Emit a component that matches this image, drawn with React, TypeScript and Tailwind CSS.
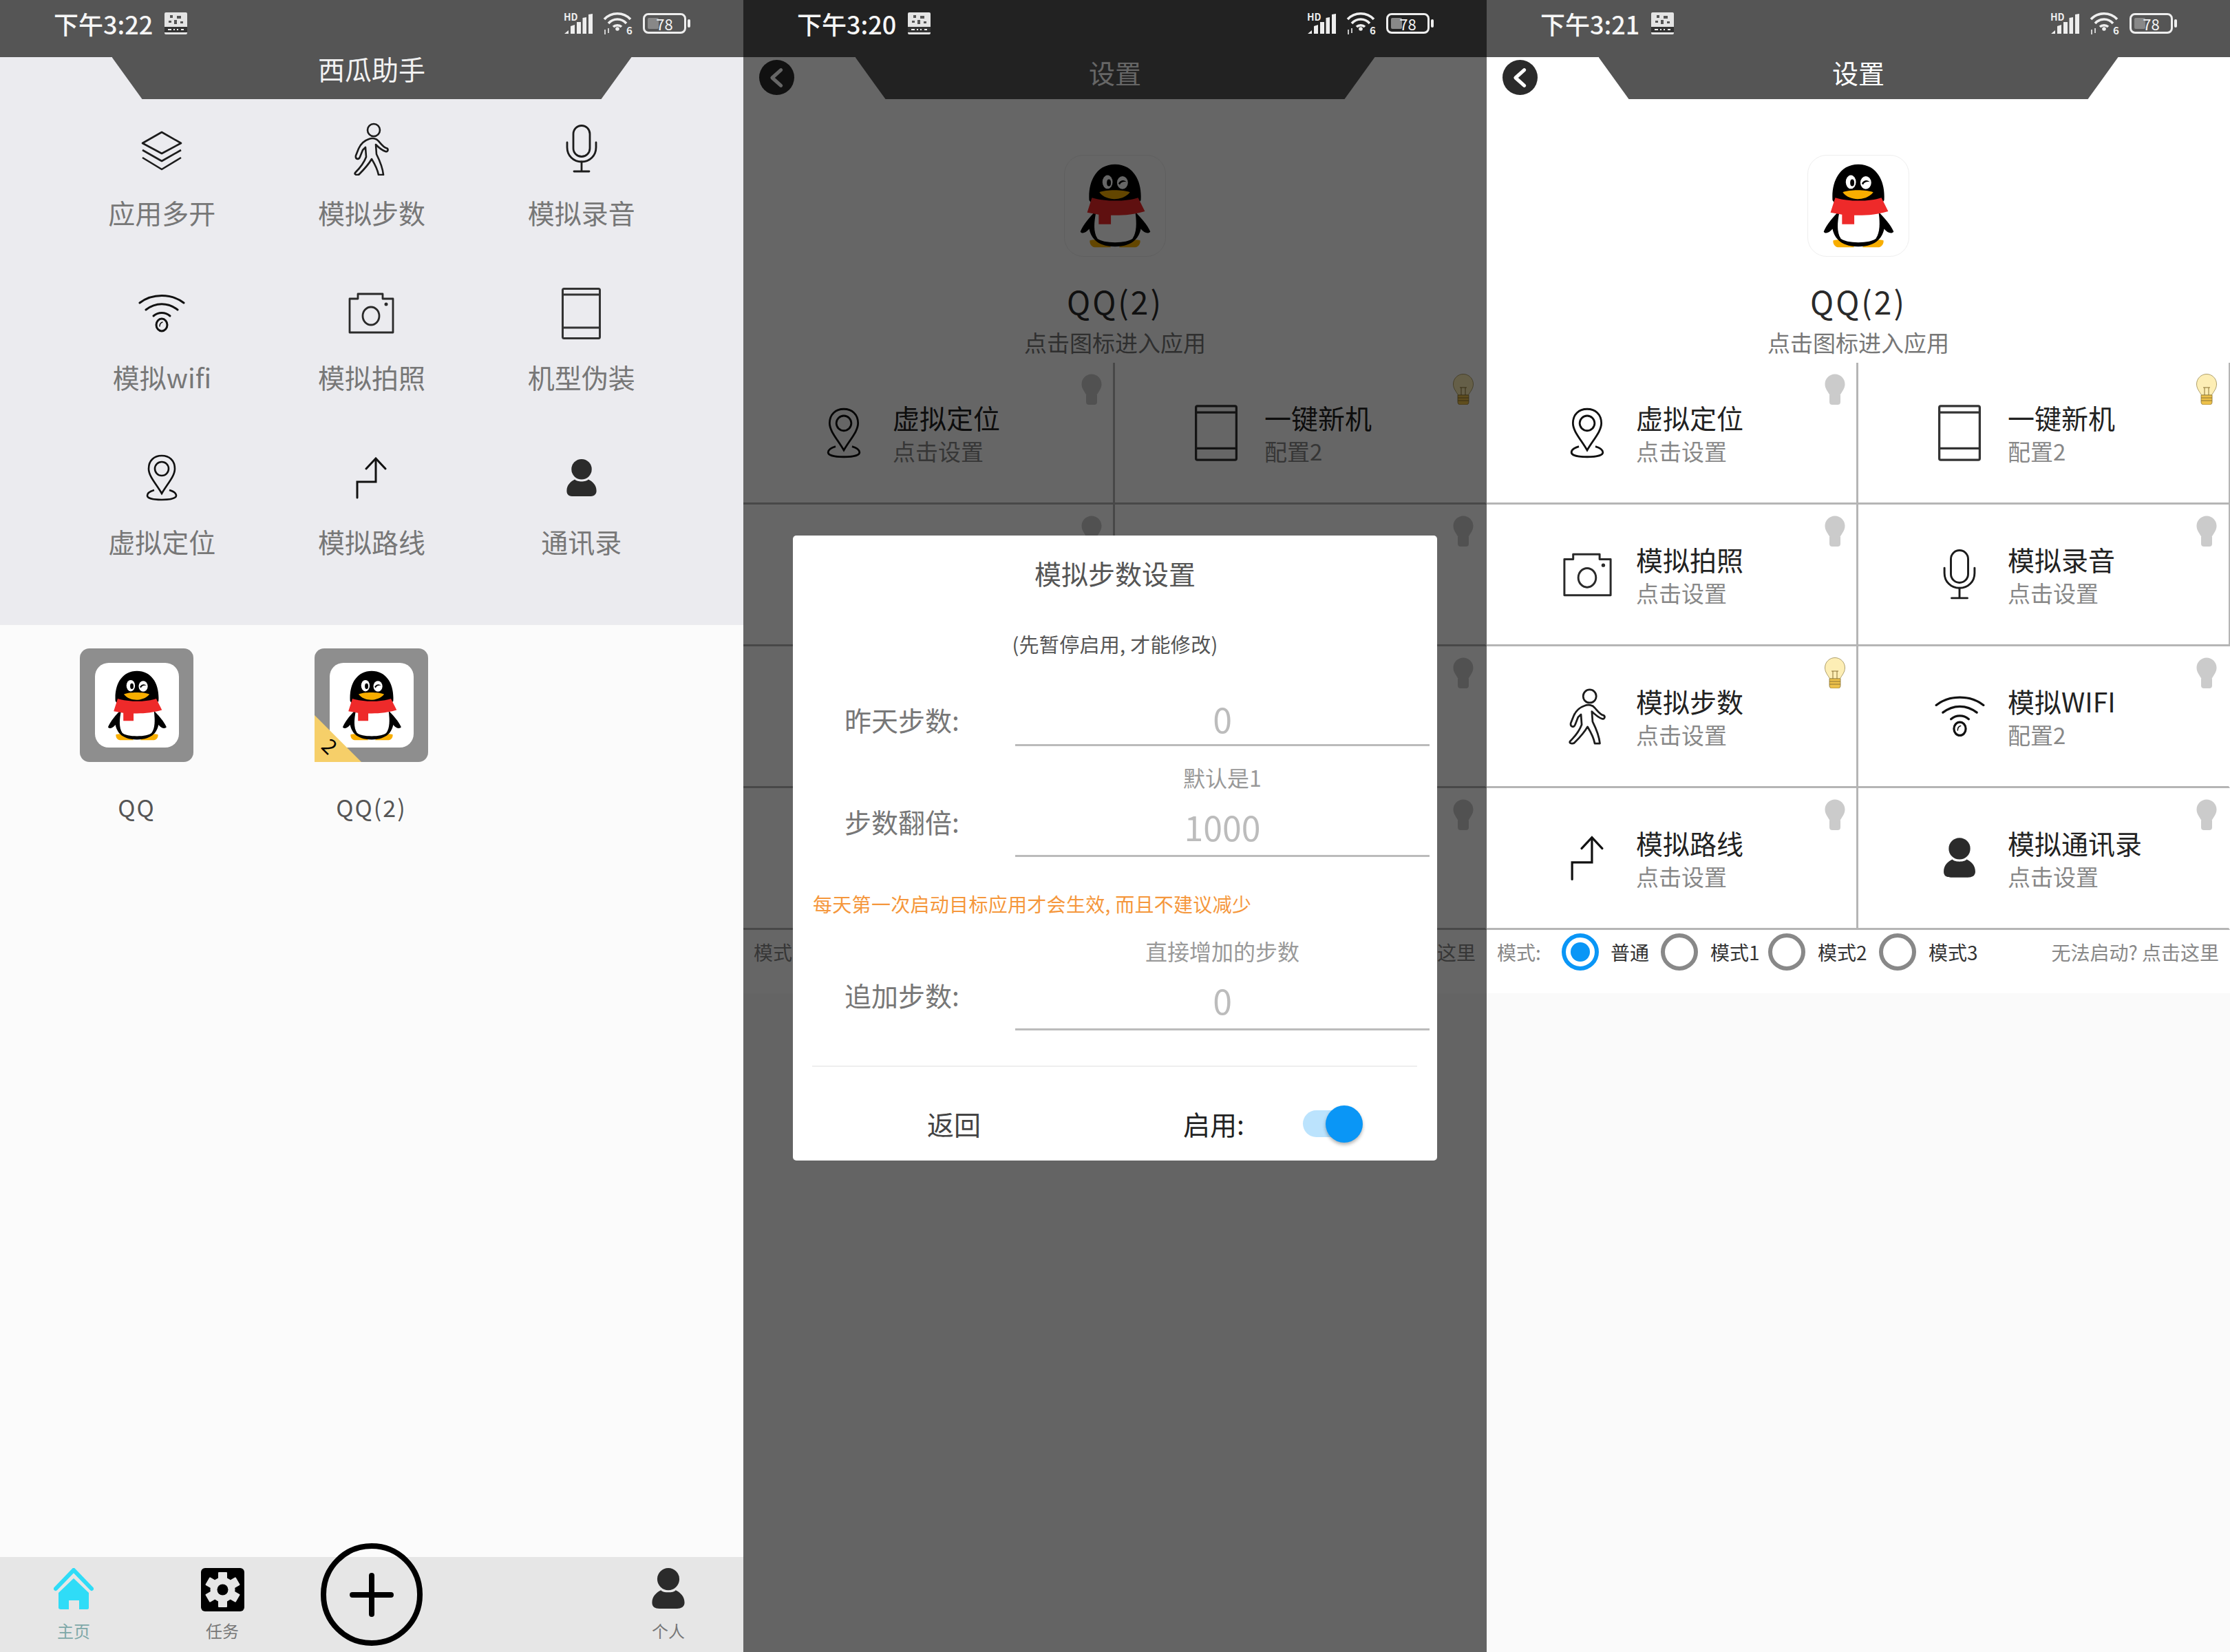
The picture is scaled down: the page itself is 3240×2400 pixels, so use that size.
import React from "react";

type IconProps = { className?: string };

function LayersIcon({ className }: IconProps) {
  return (
    <svg viewBox="0 0 60 58" className={className} fill="none" stroke="#1c1c1c" strokeWidth="2.6" strokeLinejoin="round">
      <path d="M30 2 L58 18 L30 33 L2 18 Z" />
      <path d="M2 28 L30 44 L58 28" />
      <path d="M2 39 L30 56 L58 39" />
    </svg>
  );
}

function WalkerIcon({ className }: IconProps) {
  return (
    <svg viewBox="0 0 53 77" className={className} fill="none" stroke="#1c1c1c" strokeWidth="2.6" strokeLinejoin="round">
      <circle cx="30" cy="11" r="9" />
      <path d="M23 24 C17 26 11 31 8 38 L4 48 C3 53 8 55 10 50 L14 40 L18 36 L19 50 C16 58 10 66 3 73 C1 76 7 77 9 75 C16 68 23 60 27 53 C30 58 35 66 37 76 L44 76 C43 66 38 54 34 46 L33 32 C37 36 41 40 47 42 C51 43 52 38 48 37 C43 35 40 30 37 27 C34 23 28 22 23 24 Z" />
    </svg>
  );
}

function MicIcon({ className }: IconProps) {
  return (
    <svg viewBox="0 0 46 70" className={className} fill="none" stroke="#1c1c1c" strokeWidth="2.8" strokeLinecap="round">
      <rect x="11" y="1.5" width="24" height="45" rx="12" />
      <path d="M2 26 V33 C2 45 11 54 23 54 C35 54 44 45 44 33 V26" />
      <path d="M23 54 V68 M12 68 H34" />
    </svg>
  );
}

function WifiIcon({ className }: IconProps) {
  return (
    <svg viewBox="0 0 68 56" className={className} fill="none" stroke="#111" strokeWidth="3" strokeLinecap="round">
      <path d="M2 13 C20 -1 48 -1 66 13" />
      <path d="M11 23 C25 12 43 12 57 23" />
      <path d="M22 32 C29 26 39 26 46 32" />
      <ellipse cx="34" cy="45" rx="8" ry="9" />
      <path d="M31 47 C31 44 32 42 35 41" strokeWidth="1.5" />
    </svg>
  );
}

function CameraIcon({ className }: IconProps) {
  return (
    <svg viewBox="0 0 67 60" className={className} fill="none" stroke="#2a2a2a" strokeWidth="2.8" strokeLinejoin="round">
      <path d="M2 9 H14 V2 H50 V9 H65 V58 H2 Z" />
      <ellipse cx="33" cy="34" rx="12" ry="13" />
      <circle cx="55" cy="17" r="2.5" fill="#2a2a2a" stroke="none" />
    </svg>
  );
}

function TabletIcon({ className }: IconProps) {
  return (
    <svg viewBox="0 0 57 75" className={className} fill="none" stroke="#333" strokeWidth="3" strokeLinejoin="round">
      <rect x="1.5" y="1.5" width="54" height="72" rx="2" />
      <path d="M1.5 10 H55.5 M1.5 58 H55.5" />
    </svg>
  );
}

function PinIcon({ className }: IconProps) {
  return (
    <svg viewBox="0 0 46 68" className={className} fill="none" stroke="#111" strokeWidth="2.6">
      <path d="M23 57 C15 43 4 32 4 21 C4 9 12 2 23 2 C34 2 42 9 42 21 C42 32 31 43 23 57 Z" />
      <circle cx="23" cy="21" r="10" />
      <path d="M12 52 C5 54 2 57 2 60 C2 64 11 66 23 66 C35 66 44 64 44 60 C44 57 41 54 34 52" />
    </svg>
  );
}

function RouteIcon({ className }: IconProps) {
  return (
    <svg viewBox="0 0 45 61" className={className} fill="none" stroke="#111" strokeWidth="3" strokeLinecap="round">
      <path d="M2 59 V36 H29 V3" />
      <path d="M15 17 L29 2 L43 17" />
    </svg>
  );
}

function PersonIcon({ className }: IconProps) {
  return (
    <svg viewBox="0 0 46 56" className={className} fill="#2b2b2b">
      <ellipse cx="23" cy="15" rx="15" ry="15" />
      <path d="M1 47 C1 38 7 33 13 30 C16 34 30 34 33 30 C39 33 45 38 45 47 C45 53 40 55 35 55 L11 55 C5 55 1 53 1 47 Z" />
    </svg>
  );
}

function Penguin({ className }: IconProps) {
  return (
    <svg viewBox="0 0 148 148" className={className}>
      <path d="M37 125 C48 122 62 126 68 135 L44 135 C40 135 36 130 37 125 Z M111 125 C100 122 86 126 80 135 L104 135 C108 135 112 130 111 125 Z" fill="#f8ae00" />
      <path d="M47 80 C37 90 27 102 23 112 C25 116 31 114 36 108 C38 118 45 134 74 134 C103 134 110 118 112 108 C117 114 123 116 126 112 C122 102 111 90 101 80 L112 66 C114 36 100 13 74 13 C48 13 34 36 36 66 Z" fill="#000" />
      <path d="M46 84 H104 C106 100 106 113 100 122 C93 130 55 130 48 122 C42 113 43 98 46 84 Z" fill="#fff" />
      <path d="M40 62 C60 68 90 68 108 62 L118 82 C96 88 84 88 68 88 L68 101 L50 101 L50 87 L33 84 Z" fill="#ee2a2a" />
      <ellipse cx="63" cy="39" rx="7.5" ry="10" fill="#fff" />
      <ellipse cx="65" cy="40" rx="3" ry="5" fill="#000" />
      <ellipse cx="85" cy="40" rx="8" ry="9.5" fill="#fff" />
      <path d="M79 41 C83 35 88 36 91 39 C87 38 83 39 81 43 Z" fill="#000" />
      <path d="M51 54 C60 50 86 50 96 54 C90 62 80 64 73 64 C65 64 56 61 51 54 Z" fill="#f8ae00" />
    </svg>
  );
}

function Bulb({ on }: { on?: boolean }) {
  return (
    <svg viewBox="0 0 30 45" className="h-[45px] w-[30px]">
      <path d="M15 0.5 C7 0.5 0.5 7 0.5 15 C0.5 22 5 26 7.5 31 H22.5 C25 26 29.5 22 29.5 15 C29.5 7 23 0.5 15 0.5 Z" fill={on ? "#fdeeb5" : "#cbcbcb"} stroke={on ? "#9a8a50" : "none"} strokeWidth="0.8" />
      <path d="M7 31 H23 V41 C23 44 21 45 19 45 H11 C9 45 7 44 7 41 Z" fill={on ? "#edc14b" : "#cbcbcb"} stroke={on ? "#8a7333" : "none"} strokeWidth="0.8" />
      {on && <path d="M7 35 H23 M7 39 H23 M12 31 V20 M18 31 V20 M10 20 H20" stroke="#8a7333" strokeWidth="1" fill="none" />}
    </svg>
  );
}

function StatusBar({ time, dark }: { time: string; dark?: boolean }) {
  return (
    <div className={`flex h-[83px] shrink-0 items-center pb-[16px] pl-[78px] ${dark ? "bg-[#222222]" : "bg-[#555555]"}`}>
      <span className="text-[36px] leading-[44px] font-medium text-[#f6f6f6]">{time}</span>
      <svg viewBox="0 0 33 32" className="ml-[17px] h-[32px] w-[33px]">
        <rect width="33" height="32" rx="2" fill="#e4e4e4" />
        <path d="M8 4 H12 V8 H8 Z M18 5 H24 V9 H18 Z M6 12 H10 V15 H6 Z M14 11 H18 V17 H14 Z M23 13 H27 V16 H23 Z" fill="#555" />
        <rect y="21" width="33" height="8" fill="#333" />
        <path d="M5 24 H10 V26 H5 Z M13 24 H15 V26 H13 Z M18 24 H20 V26 H18 Z M24 24 H28 V26 H24 Z" fill="#eee" />
      </svg>
      <div className="ml-auto mr-[77px] flex items-center">
        <svg viewBox="0 0 42 30" className="h-[30px] w-[42px] overflow-visible" fill="#eeeeee">
          <text x="0" y="11" fontSize="14" fontWeight="700" fill="#eeeeee">HD</text>
          <path d="M1 30 L7 25 V30 Z M10 30 V19 L16 17 V30 Z M19 30 V13 H25 V30 Z M27.5 30 V7 L33 6 V30 Z M36 30 V2 L42 1 V30 Z" />
        </svg>
        <svg viewBox="0 0 44 34" className="ml-[15px] h-[34px] w-[44px] overflow-visible" fill="none" stroke="#eeeeee" strokeWidth="3.6">
          <path d="M2 11 C12 0 30 0 40 11" />
          <path d="M8 17 C15 9 27 9 34 17" />
          <path d="M15 22 C18 19 24 19 27 22" />
          <circle cx="21" cy="25" r="2.8" fill="#eeeeee" stroke="none" />
          <path d="M3 26 V33 M8 24 V31" strokeWidth="1.6" />
          <text x="34" y="33" fontSize="15" fontWeight="700" fill="#eeeeee" stroke="none">6</text>
        </svg>
        <div className="ml-[14px] flex items-center">
          <div className="relative flex h-[30px] w-[63px] items-center justify-center rounded-[8px] border-[3px] border-[#eeeeee]">
            <div className="absolute top-[4px] bottom-[4px] left-[4px] w-[16px] rounded-[2px] bg-[#888888]" />
            <span className="relative text-[22px] leading-[24px] text-[#f4f4f4]">78</span>
          </div>
          <div className="ml-[2px] h-[12px] w-[4px] rounded-[2px] bg-[#eeeeee]" />
        </div>
      </div>
    </div>
  );
}

function Notch({ title, dark, settings }: { title: string; dark?: boolean; settings?: boolean }) {
  return (
    <div
      className={`mx-auto flex h-[61px] w-[755px] shrink-0 justify-center [clip-path:polygon(0_0,100%_0,calc(100%-44px)_100%,44px_100%)] ${dark ? "bg-[#222222]" : "bg-[#555555]"} ${settings ? "text-[38px] leading-[44px] text-white" : "text-[39px] leading-[32px] text-[#f2f2f2]"}`}
    >
      {title}
    </div>
  );
}

const tools = [
  { label: "应用多开", icon: <LayersIcon className="mt-[5px] h-[58px] w-[60px]" /> },
  { label: "模拟步数", icon: <WalkerIcon className="h-[77px] w-[53px]" /> },
  { label: "模拟录音", icon: <MicIcon className="h-[70px] w-[46px]" /> },
  { label: "模拟wifi", icon: <WifiIcon className="h-[56px] w-[68px]" /> },
  { label: "模拟拍照", icon: <CameraIcon className="h-[60px] w-[67px]" /> },
  { label: "机型伪装", icon: <TabletIcon className="h-[75px] w-[57px]" /> },
  { label: "虚拟定位", icon: <PinIcon className="h-[68px] w-[46px]" /> },
  { label: "模拟路线", icon: <RouteIcon className="h-[61px] w-[45px]" /> },
  { label: "通讯录", icon: <PersonIcon className="h-[55px] w-[46px]" /> },
];

function AppTile({ label, badge }: { label: string; badge?: boolean }) {
  return (
    <div className="flex w-[165px] flex-col items-center">
      <div className="relative flex h-[165px] w-[165px] items-center justify-center rounded-[14px] bg-[#8e8e8e]">
        <div className="flex h-[123px] w-[122px] items-center justify-center rounded-[20px] bg-white">
          <Penguin className="h-[122px] w-[122px]" />
        </div>
        {badge && (
          <>
            <div className="absolute bottom-0 left-0 h-[68px] w-[68px] bg-[#f6cf69] [clip-path:polygon(0_0,0_100%,100%_100%)]" />
            <span className="absolute bottom-[9px] left-[15px] rotate-45 text-[30px] leading-none text-black">2</span>
          </>
        )}
      </div>
      <div className="mt-[43px] h-[46px] whitespace-nowrap text-[34px] leading-[46px] tracking-[2px] text-[#555555]">{label}</div>
    </div>
  );
}

function Tab({ label, icon, tint, className }: { label: string; icon: React.ReactNode; tint: string; className: string }) {
  return (
    <div className={`flex w-[80px] flex-col items-center pt-[16px] ${className}`}>
      <div className="flex h-[63px] items-start justify-center">{icon}</div>
      <div className={`mt-[13px] h-[30px] text-[24px] leading-[30px] ${tint}`}>{label}</div>
    </div>
  );
}

function HomeScreen() {
  return (
    <div className="flex h-[2400px] w-[1080px] shrink-0 flex-col bg-[#fbfbfb]">
      <StatusBar time="下午3:22" />
      <div className="h-[825px] shrink-0 bg-[#ebebef]">
        <Notch title="西瓜助手" />
        <div className="grid grid-cols-3 px-[83px]">
          {tools.map((tool) => (
            <div key={tool.label} className="flex h-[239px] flex-col items-center pt-[27px]">
              <div className="flex h-[90px] items-center justify-center">{tool.icon}</div>
              <div className="mt-[24px] h-[46px] text-[39px] leading-[46px] text-[#777777]">{tool.label}</div>
            </div>
          ))}
        </div>
      </div>
      <div className="flex flex-1 pt-[34px] pl-[116px]">
        <AppTile label="QQ" />
        <div className="ml-[176px]">
          <AppTile label="QQ(2)" badge />
        </div>
      </div>
      <div className="flex h-[138px] shrink-0 items-start bg-[#e6e6e6]">
        <Tab
          label="主页"
          tint="text-[#7da8a8]"
          className="ml-[67px]"
          icon={
            <svg viewBox="0 0 58 60" className="h-[60px] w-[58px]" fill="#2fdcf7">
              <path d="M3 30 L29 3 L55 30" fill="none" stroke="#2fdcf7" strokeWidth="6" strokeLinecap="round" strokeLinejoin="round" />
              <path d="M29 15 L51 36 V58 C51 59 50 60 49 60 H37 V47 H22 V60 H10 C9 60 7 59 7 58 V36 Z" />
            </svg>
          }
        />
        <Tab
          label="任务"
          tint="text-[#777777]"
          className="ml-[136px]"
          icon={
            <svg viewBox="0 0 63 63" className="h-[63px] w-[63px]">
              <rect width="63" height="63" rx="6" fill="#000" />
              <g fill="#e6e6e6">
                <circle cx="31.5" cy="31.5" r="18" />
                {[0, 60, 120, 180, 240, 300].map((deg) => (
                  <rect key={deg} x="25" y="6" width="13" height="14" rx="1" transform={`rotate(${deg} 31.5 31.5)`} />
                ))}
              </g>
              <circle cx="31.5" cy="31.5" r="8" fill="#000" />
            </svg>
          }
        />
        <div className="relative ml-[103px] -mt-[20px] flex h-[149px] w-[148px] items-center justify-center rounded-full border-[8px] border-black">
          <div className="h-[8px] w-[64px] rounded-full bg-black" />
          <div className="absolute h-[64px] w-[8px] rounded-full bg-black" />
        </div>
        <Tab
          label="个人"
          tint="text-[#777777]"
          className="ml-[317px]"
          icon={<PersonIcon className="h-[60px] w-[50px]" />}
        />
      </div>
    </div>
  );
}

type Cell = { title: string; sub: string; icon: React.ReactNode; on?: boolean };

const cells: Cell[] = [
  { title: "虚拟定位", sub: "点击设置", icon: <PinIcon className="h-[74px] w-[50px]" /> },
  { title: "一键新机", sub: "配置2", on: true, icon: <TabletIcon className="h-[82px] w-[62px]" /> },
  { title: "模拟拍照", sub: "点击设置", icon: <CameraIcon className="h-[64px] w-[73px]" /> },
  { title: "模拟录音", sub: "点击设置", icon: <MicIcon className="h-[73px] w-[48px]" /> },
  { title: "模拟步数", sub: "点击设置", on: true, icon: <WalkerIcon className="h-[83px] w-[56px]" /> },
  { title: "模拟WIFI", sub: "配置2", icon: <WifiIcon className="h-[61px] w-[73px]" /> },
  { title: "模拟路线", sub: "点击设置", icon: <RouteIcon className="h-[66px] w-[48px]" /> },
  { title: "模拟通讯录", sub: "点击设置", icon: <PersonIcon className="h-[59px] w-[48px]" /> },
];

function SettingCell({ cell, index, edge }: { cell: Cell; index: number; edge?: boolean }) {
  const left = index % 2 === 0;
  const sideBorder = left
    ? "border-r-[3px] border-r-[#b5b5b5]"
    : edge && index < 4
      ? "border-r-[2px] border-r-[#b5b5b5]"
      : "border-r-[2px] border-r-transparent";
  return (
    <div className={`relative flex h-[206px] border-b-[3px] border-b-[#b5b5b5] ${sideBorder}`}>
      <div className={`flex w-[100px] items-center justify-center ${left ? "ml-[96px]" : "ml-[97px]"}`}>{cell.icon}</div>
      <div className={`flex flex-col pt-[55px] ${left ? "ml-[21px]" : "ml-[20px]"}`}>
        <div className="h-[48px] whitespace-nowrap text-[39px] leading-[48px] text-[#222222]">{cell.title}</div>
        <div className="mt-[5px] h-[40px] whitespace-nowrap text-[33px] leading-[40px] text-[#888888]">{cell.sub}</div>
      </div>
      <div className={`absolute top-[16px] ${left ? "right-[16px]" : "right-[17px]"}`}>
        <Bulb on={cell.on} />
      </div>
    </div>
  );
}

function Radio({ checked }: { checked?: boolean }) {
  return (
    <div className={`flex h-[54px] w-[54px] shrink-0 items-center justify-center rounded-full border-[6px] ${checked ? "border-[#0a96f6]" : "border-[#888888]"}`}>
      {checked && <div className="h-[28px] w-[28px] rounded-full bg-[#0a96f6]" />}
    </div>
  );
}

function ModeRow() {
  return (
    <div className="flex h-[92px] shrink-0 items-center pb-[28px] pl-[15px] text-[28px] leading-[40px]">
      <span className="w-[62px] whitespace-nowrap text-[#888888]">模式:</span>
      <div className="ml-[32px]"><Radio checked /></div>
      <span className="ml-[17px] w-[56px] whitespace-nowrap text-[#333333]">普通</span>
      <div className="ml-[17px]"><Radio /></div>
      <span className="ml-[18px] w-[66px] whitespace-nowrap text-[#333333]">模式1</span>
      <div className="ml-[18px]"><Radio /></div>
      <span className="ml-[18px] w-[70px] whitespace-nowrap text-[#333333]">模式2</span>
      <div className="ml-[19px]"><Radio /></div>
      <span className="ml-[18px] w-[70px] whitespace-nowrap text-[#333333]">模式3</span>
      <span className="ml-auto mr-[16px] whitespace-nowrap text-[#888888]">无法启动? 点击这里</span>
    </div>
  );
}

function Field({ label, hint, value, labelGap, className }: { label: string; hint?: string; value: string; labelGap: string; className: string }) {
  return (
    <div className={`flex items-end pl-[75px] pr-[11px] ${className}`}>
      <div className={`h-[46px] w-[248px] shrink-0 whitespace-nowrap text-[39px] leading-[46px] text-[#777777] ${labelGap}`}>{label}</div>
      <div className={`flex flex-1 flex-col items-center border-b-[3px] border-b-[#bbbbbb] ${hint ? "pb-[10px]" : "pb-[6px]"}`}>
        {hint && <div className="mb-[19px] h-[40px] text-[32px] leading-[40px] text-[#999999]">{hint}</div>}
        <div className="h-[64px] text-[50px] leading-[64px] text-[#bcbcbc]">{value}</div>
      </div>
    </div>
  );
}

function StepDialog() {
  return (
    <div className="absolute top-[695px] left-[72px] z-10 h-[908px] w-[936px] rounded-[5px] bg-white pt-[29px]">
      <div className="h-[50px] text-center text-[39px] leading-[50px] text-[#555555]">模拟步数设置</div>
      <div className="mt-[58px] h-[40px] text-center text-[29px] leading-[40px] tracking-[0.3px] text-[#555555]">(先暂停启用, 才能修改)</div>
      <Field label="昨天步数:" value="0" labelGap="mb-[16px]" className="mt-[56px]" />
      <Field label="步数翻倍:" hint="默认是1" value="1000" labelGap="mb-[29px]" className="mt-[25px]" />
      <div className="mt-[48px] h-[40px] pl-[29px] text-[28px] leading-[40px] tracking-[0.3px] text-[#f5973c]">每天第一次启动目标应用才会生效, 而且不建议减少</div>
      <Field label="追加步数:" hint="直接增加的步数" value="0" labelGap="mb-[29px]" className="mt-[28px]" />
      <div className="mt-[51px] ml-[28px] h-[2px] w-[879px] bg-[#eeeeee]" />
      <div className="flex h-[137px] items-center pt-[27px] text-[39px] leading-[46px]">
        <span className="ml-[195px] w-[78px] whitespace-nowrap text-[#444444]">返回</span>
        <span className="ml-[294px] w-[88px] whitespace-nowrap text-[#222222]">启用:</span>
        <div className="relative ml-[86px] h-[39px] w-[87px]">
          <div className="h-[39px] w-[75px] rounded-full bg-[#bbe3fd]" />
          <div className="absolute -top-[7px] right-0 h-[54px] w-[54px] rounded-full bg-[#0a96f6] shadow-[0_3px_5px_rgba(0,0,0,0.3)]" />
        </div>
      </div>
    </div>
  );
}

function SettingsScreen({ time, dimmed }: { time: string; dimmed?: boolean }) {
  return (
    <div className="flex h-[2400px] w-[1080px] shrink-0 flex-col">
      <StatusBar time={time} dark={dimmed} />
      <div className="relative flex flex-1 flex-col bg-white">
        <Notch title="设置" settings />
        <div className="absolute top-[4px] left-[23px] flex h-[51px] w-[51px] items-center justify-center rounded-full bg-[#2b2b2b]">
          <svg viewBox="0 0 24 24" className="h-[34px] w-[34px]" fill="none" stroke="white" strokeWidth="3.6" strokeLinecap="round" strokeLinejoin="round">
            <path d="M16 4 L7 12 L16 20" />
          </svg>
        </div>
        <div className="mx-auto mt-[81px] flex h-[148px] w-[148px] shrink-0 items-center justify-center rounded-[28px] border border-[#eeeeee]">
          <Penguin className="h-[146px] w-[146px]" />
        </div>
        <div className="mt-[34px] h-[60px] text-center text-[46px] leading-[60px] tracking-[3px] text-[#2a2a2a]">QQ(2)</div>
        <div className="mt-[10px] h-[40px] text-center text-[33px] leading-[40px] text-[#777777]">点击图标进入应用</div>
        <div className="mt-[10px] grid shrink-0 grid-cols-2">
          {cells.map((cell, i) => (
            <SettingCell key={cell.title} cell={cell} index={i} edge={!dimmed} />
          ))}
        </div>
        <ModeRow />
        <div className="flex-1 bg-[#fafafa]" />
        {dimmed && <div className="absolute inset-0 bg-black/60" />}
        {dimmed && <StepDialog />}
      </div>
    </div>
  );
}

export default function App() {
  return (
    <div className="flex h-[2400px] w-[3240px] overflow-hidden font-['Noto_Sans_CJK_SC',sans-serif]">
      <HomeScreen />
      <SettingsScreen time="下午3:20" dimmed />
      <SettingsScreen time="下午3:21" />
    </div>
  );
}
